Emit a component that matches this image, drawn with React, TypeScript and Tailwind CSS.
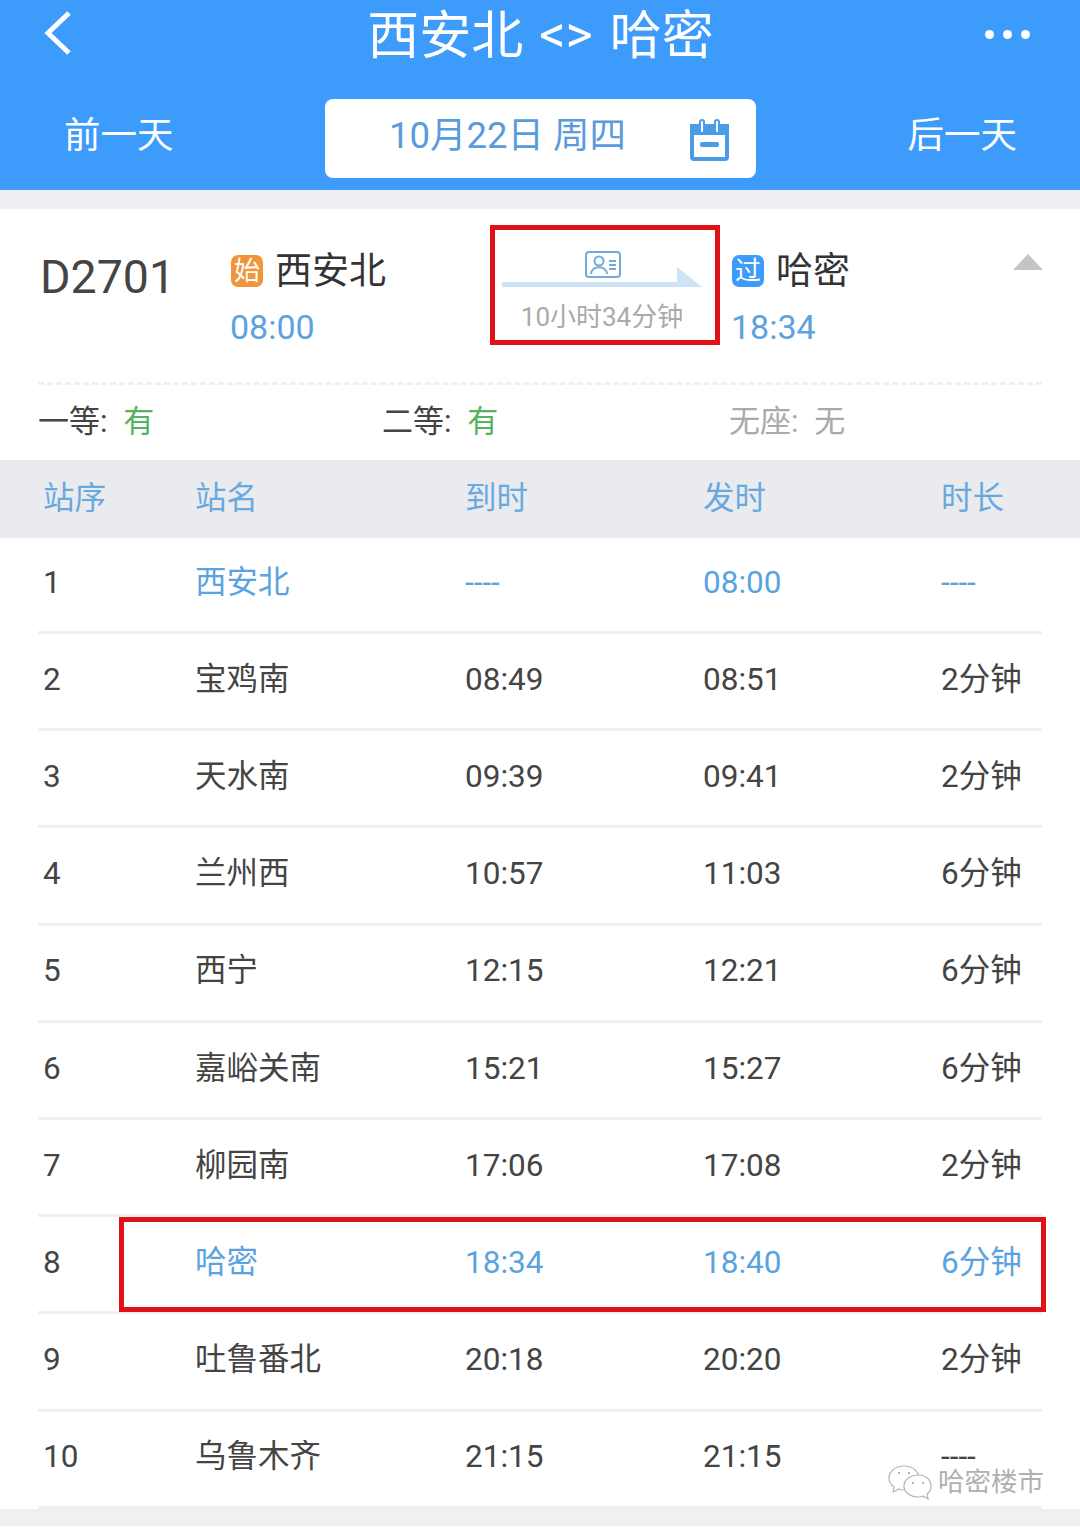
const stops = [
  { no: "1", name: "西安北", arrive: "----", leave: "08:00", stay: "----", blue: true },
  { no: "2", name: "宝鸡南", arrive: "08:49", leave: "08:51", stay: "2分钟" },
  { no: "3", name: "天水南", arrive: "09:39", leave: "09:41", stay: "2分钟" },
  { no: "4", name: "兰州西", arrive: "10:57", leave: "11:03", stay: "6分钟" },
  { no: "5", name: "西宁", arrive: "12:15", leave: "12:21", stay: "6分钟" },
  { no: "6", name: "嘉峪关南", arrive: "15:21", leave: "15:27", stay: "6分钟" },
  { no: "7", name: "柳园南", arrive: "17:06", leave: "17:08", stay: "2分钟" },
  { no: "8", name: "哈密", arrive: "18:34", leave: "18:40", stay: "6分钟", blue: true, all: true },
  { no: "9", name: "吐鲁番北", arrive: "20:18", leave: "20:20", stay: "2分钟" },
  { no: "10", name: "乌鲁木齐", arrive: "21:15", leave: "21:15", stay: "----" },
];

const columns = "grid grid-cols-[152px_270px_238px_238px_1fr] items-center pl-[43px]";

function TopBar() {
  return (
    <header className="h-[190px] bg-[#3d9bfb] text-white">
      <div className="flex h-[72px] items-center justify-between pl-[44px] pr-[50px]">
        <svg width="28" height="44" viewBox="0 0 28 44" fill="none" stroke="white" strokeWidth="5" className="-mt-[6px]">
          <path d="M25 2 L4 22 L25 42" />
        </svg>
        <h1 className="ml-[24px] text-[52px] leading-none font-normal">
          西安北 <span className="mr-[4px] ml-[3px] align-[2px]">&lt;&gt;</span> 哈密
        </h1>
        <div className="-mt-[4px] flex gap-[9px]">
          <span className="size-[9px] rounded-full bg-white" />
          <span className="size-[9px] rounded-full bg-white" />
          <span className="size-[9px] rounded-full bg-white" />
        </div>
      </div>
      <div className="mt-[27px] flex items-center justify-between pl-[64px] pr-[63px]">
        <span className="-mt-[4px] text-[36.5px] leading-none">前一天</span>
        <div className="flex h-[79px] w-[431px] items-center justify-between rounded-[8px] bg-white pl-[64px] pr-[25px] text-[#5a9cdb]">
          <span className="-mt-[4px] text-[36.5px] leading-none">10月22日 周四</span>
          <svg width="42" height="42" viewBox="0 0 42 42" fill="none" className="mt-[3px]">
            <path d="M3 7 H38 V38 a2 2 0 0 1 -2 2 H5 a2 2 0 0 1 -2 -2 Z" stroke="#4a9be8" strokeWidth="4" />
            <rect x="3" y="7" width="35" height="9" fill="#4a9be8" />
            <rect x="11" y="1" width="4" height="13" rx="2" fill="white" stroke="#4a9be8" strokeWidth="2" />
            <rect x="26" y="1" width="4" height="13" rx="2" fill="white" stroke="#4a9be8" strokeWidth="2" />
            <rect x="11" y="23" width="19" height="5" rx="2" fill="#4a9be8" />
          </svg>
        </div>
        <span className="-mt-[4px] text-[36.5px] leading-none">后一天</span>
      </div>
    </header>
  );
}

function Badge({ label, color }: { label: string; color: string }) {
  return (
    <span className={`flex size-[32px] items-center justify-center rounded-[7px] text-[26px] leading-none text-white ${color}`}>
      {label}
    </span>
  );
}

function TrainSummary() {
  return (
    <section className="relative mx-[38px] flex h-[176px] border-b-[3px] border-dashed border-[#f0f0f0] pt-[42px]">
      <div className="w-[193px] pl-[2px] pt-[3px] text-[46.5px] leading-none text-[#444]">D2701</div>
      <div className="w-[271px]">
        <div className="flex items-center gap-[12px]">
          <Badge label="始" color="bg-[#f0953a]" />
          <span className="mt-[2px] text-[37px] leading-none text-[#333]">西安北</span>
        </div>
        <div className="mt-[20px] -ml-[1px] text-[34px] leading-none text-[#5aa3e0]">08:00</div>
      </div>
      <div className="w-[230px]">
        <svg width="200" height="42" viewBox="0 0 200 42">
          <rect x="84" y="1" width="34" height="25" rx="3" fill="none" stroke="#74a9dc" strokeWidth="2" />
          <circle cx="97" cy="10" r="4.5" fill="none" stroke="#74a9dc" strokeWidth="2" />
          <path d="M89 23 c0 -9 16 -9 16 0" fill="none" stroke="#74a9dc" strokeWidth="2" />
          <path d="M107 10 H114 M107 14 H114 M107 18 H114" stroke="#74a9dc" strokeWidth="2" />
          <path d="M0 31 H175 V16 L200 36 H0 Z" fill="#cfe3f8" />
        </svg>
        <div className="mt-[11px] w-[200px] text-center text-[26px] leading-none text-[#aaaaaa]">10小时34分钟</div>
      </div>
      <div>
        <div className="flex items-center gap-[12px]">
          <Badge label="过" color="bg-[#3d9bfb]" />
          <span className="mt-[2px] text-[37px] leading-none text-[#333]">哈密</span>
        </div>
        <div className="mt-[20px] -ml-[1px] text-[34px] leading-none text-[#5aa3e0]">18:34</div>
      </div>
      <span className="absolute top-[45px] right-[-1px] h-0 w-0 border-x-[15px] border-b-[16px] border-x-transparent border-b-[#c4c4c4]" />
    </section>
  );
}

function Seats() {
  return (
    <div className="grid h-[75px] grid-cols-[345px_346px_1fr] items-center pl-[38px] pb-[3px] text-[31px] leading-none">
      <div className="text-[#444]">
        一等: <span className="ml-[8px] text-[#55b35f]">有</span>
      </div>
      <div className="-ml-[1px] text-[#444]">
        二等: <span className="ml-[8px] text-[#55b35f]">有</span>
      </div>
      <div className="text-[#aaaaaa]">
        无座: <span className="ml-[8px]">无</span>
      </div>
    </div>
  );
}

function StopTable() {
  return (
    <div className="text-[31.5px] leading-none">
      <div className={`${columns} h-[78px] bg-[#e9ebee] pb-[1px] text-[#6aa9e0]`}>
        <span>站序</span>
        <span>站名</span>
        <span>到时</span>
        <span>发时</span>
        <span>时长</span>
      </div>
      {stops.map((s, i) => {
        const tone = s.blue ? "text-[#5aa3e0]" : "text-[#444]";
        return (
          <div key={s.no} className={`mx-[38px] border-b-[3px] border-[#f0f0f0] ${i === 0 ? "h-[96px]" : "h-[97.2px]"}`}>
            <div className={`${columns} -mx-[38px] h-full pb-[3px] ${s.all ? "text-[#5aa3e0]" : "text-[#444]"}`}>
              <span className="text-[#444]">{s.no}</span>
              <span className={tone}>{s.name}</span>
              <span className={s.no === "1" ? tone : ""}>{s.arrive}</span>
              <span className={s.no === "1" ? tone : ""}>{s.leave}</span>
              <span className={s.no === "1" ? tone : ""}>{s.stay}</span>
            </div>
          </div>
        );
      })}
    </div>
  );
}

export default function App() {
  return (
    <div className="relative h-[1530px] w-[1080px] overflow-hidden bg-white font-['Roboto','Noto_Sans_CJK_SC',sans-serif]">
      <TopBar />
      <div className="h-[19px] bg-[#eeeff2]" />
      <TrainSummary />
      <Seats />
      <StopTable />
      <div className="h-[17px] bg-[#f0f0f3]" />

      {/* annotations on top of the screenshot */}
      <div className="absolute top-[225px] left-[490px] h-[120px] w-[230px] border-[5px] border-[#e01218]" />
      <div className="absolute top-[1217px] left-[119px] h-[95px] w-[927px] border-[5px] border-[#e01218]" />

      {/* watermark */}
      <div className="absolute top-[1464px] left-[888px] flex items-center gap-[6px]">
        <svg width="44" height="36" viewBox="0 0 44 36" fill="white" stroke="#b5b5b5" strokeWidth="1.2">
          <path d="M16 2 C7 2 1 8 1 14 C1 18 3 21 6 23 L5 28 L11 25 C13 26 15 26 17 26 C25 26 31 20 31 14 C31 8 25 2 16 2 Z" />
          <path d="M30 11 C22 11 16 16 16 22 C16 28 22 33 30 33 C32 33 33 33 35 32 L40 35 L39 30 C42 28 43 25 43 22 C43 16 38 11 30 11 Z" />
          <circle cx="11" cy="9" r="1" fill="#999" stroke="none" />
          <circle cx="21" cy="9" r="1" fill="#999" stroke="none" />
          <circle cx="25" cy="19" r="1" fill="#999" stroke="none" />
          <circle cx="35" cy="19" r="1" fill="#999" stroke="none" />
        </svg>
        <span className="text-[26.5px] leading-none text-[#b0b0b0]">哈密楼市</span>
      </div>
    </div>
  );
}
